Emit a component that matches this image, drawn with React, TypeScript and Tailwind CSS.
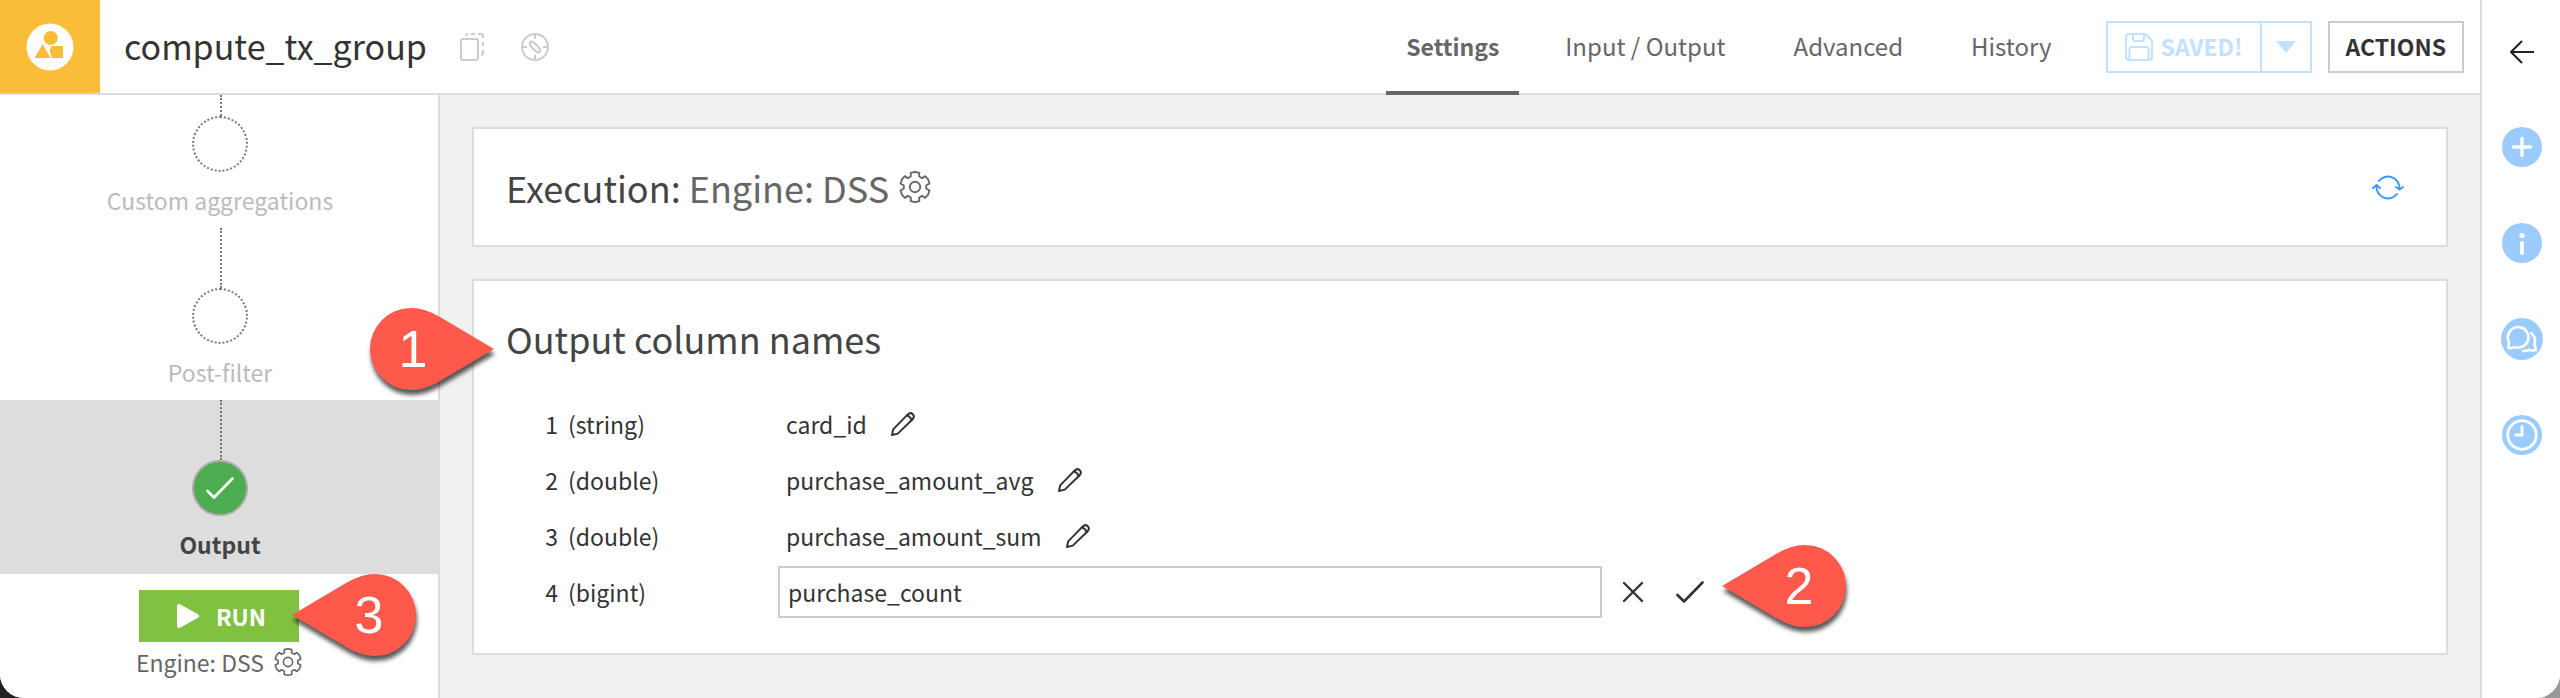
import { useState } from 'react';

interface Step {
  label: string;
  active?: boolean;
  first?: boolean;
}

interface OutputColumn {
  type: string;
  name: string;
  editing?: boolean;
}

const steps: Step[] = [
  { label: 'Custom aggregations', first: true },
  { label: 'Post-filter' },
  { label: 'Output', active: true },
];

const columns: OutputColumn[] = [
  { type: 'string', name: 'card_id' },
  { type: 'double', name: 'purchase_amount_avg' },
  { type: 'double', name: 'purchase_amount_sum' },
  { type: 'bigint', name: 'purchase_count', editing: true },
];

const tabs = ['Settings', 'Input / Output', 'Advanced', 'History'];

// outline of a six-tooth gear in a 28x28 box
const gearPoints = [0, 60, 120, 180, 240, 300]
  .flatMap((tooth) => [
    [tooth - 27, 9.8],
    [tooth - 21, 10],
    [tooth - 17, 13],
    [tooth, 13.3],
    [tooth + 17, 13],
    [tooth + 21, 10],
    [tooth + 27, 9.8],
  ])
  .map(([angle, radius]) => {
    const rad = (angle * Math.PI) / 180;
    return `${(14 + radius * Math.sin(rad)).toFixed(2)},${(14 - radius * Math.cos(rad)).toFixed(2)}`;
  })
  .join(' ');

const GearIcon = ({ className }: { className: string }) => (
  <svg viewBox="0 0 28 28" className={className} fill="none" stroke="currentColor" strokeWidth="1.6" strokeLinejoin="round">
    <polygon points={gearPoints} />
    <circle cx="14" cy="14" r="4.6" />
  </svg>
);

const PencilIcon = () => (
  <svg viewBox="0 0 24 24" className="size-6" fill="none" stroke="currentColor" strokeWidth="2" strokeLinejoin="round" strokeLinecap="round">
    <path d="M1 23 L2.2 17.4 L16.8 2.4 Q19.4 0 21.8 2.2 Q24 4.6 21.6 7.2 L6.8 21.6 Z" />
    <path d="M15.8 3.4 Q19.6 4.4 20.6 8.2" />
  </svg>
);

const CheckIcon = ({ className }: { className: string }) => (
  <svg viewBox="0 0 28 22" className={className} fill="none" stroke="currentColor" strokeWidth="2.6" strokeLinecap="round" strokeLinejoin="round">
    <path d="M1.5 14 L8 20.5 L26.5 1.5" />
  </svg>
);

interface PinProps {
  label: string;
  pointing: 'left' | 'right';
  className: string;
}

const Pin = ({ label, pointing, className }: PinProps) => (
  <div className={`pointer-events-none absolute z-10 h-[82px] w-[124px] ${className}`}>
    <svg viewBox="0 0 124 82" className="size-full overflow-visible drop-shadow-[1px_5px_2px_rgba(0,0,0,0.65)]">
      <path
        fill="#ff594b"
        d={
          pointing === 'right'
            ? 'M124 41 L70 9 Q55 0 41 0 A41 41 0 0 0 41 82 Q55 82 70 73 Z'
            : 'M0 41 L54 9 Q69 0 83 0 A41 41 0 0 1 83 82 Q69 82 54 73 Z'
        }
      />
    </svg>
    <span
      className={`absolute top-0 flex h-[82px] w-[82px] items-center justify-center font-['Liberation_Sans',sans-serif] text-[52px] leading-none text-white ${
        pointing === 'right' ? 'left-0 pl-1' : 'right-0 pr-3'
      }`}
    >
      {label}
    </span>
  </div>
);

const Header = () => {
  const [activeTab, setActiveTab] = useState('Settings');

  return (
    <header className="flex h-[95px] items-stretch border-b-2 border-[#dddddd] bg-white">
      <div className="flex w-[100px] shrink-0 items-center justify-center bg-[#f9bd38]">
        <svg viewBox="0 0 48 48" className="size-12" fill="#f9bd38">
          <circle cx="24" cy="24" r="23.5" fill="#fff" />
          <circle cx="24.7" cy="15" r="7" />
          <path d="M8.5 35 L16.7 21 L24.5 35 Z" />
          <path d="M25 23 H37 V35 H26 L23.5 28 Z" />
        </svg>
      </div>
      <h1 className="flex items-center pb-0.5 pl-6 text-[34px] leading-none text-[#333333]">compute_tx_group</h1>
      <div className="flex items-center gap-9 pl-8 text-[#cccccc]">
        <button type="button" aria-label="Copy">
          <svg viewBox="0 0 26 28" className="h-7 w-[26px]" fill="none" stroke="currentColor" strokeWidth="2">
            <rect x="2" y="6" width="17" height="21" rx="2" />
            <path d="M7 3 Q7 1 9 1 M12 1 H16 M19 1 H22 Q24 1 24 3 V5 M24 9 V13 M24 17 V20 Q24 22 22 22" />
          </svg>
        </button>
        <button type="button" aria-label="Explore">
          <svg viewBox="0 0 28 28" className="size-7" fill="none" stroke="currentColor" strokeWidth="2">
            <circle cx="14" cy="14" r="13" />
            <path d="M14 1 V6 M14 22 V27 M1 14 H6 M22 14 H27" />
            <ellipse cx="14" cy="14" rx="7" ry="2.6" transform="rotate(47 14 14)" />
          </svg>
        </button>
      </div>
      <nav className="ml-auto flex gap-6 text-[#666666]">
        {tabs.map((tab) => (
          <button
            key={tab}
            type="button"
            onClick={() => setActiveTab(tab)}
            className={`-mb-0.5 border-b-4 leading-8 ${
              tab === activeTab ? 'border-[#666666] px-5 text-[23px] font-bold' : 'border-transparent px-[22px] text-[24px]'
            }`}
          >
            {tab}
          </button>
        ))}
      </nav>
      <div className="flex items-center gap-4 pr-4 pl-8 text-[23px] font-bold">
        <div className="flex h-[52px] border-2 border-[#c4e0ff] text-[#c4e0ff]">
          <button type="button" className="flex items-center gap-2 px-[17px]">
            <svg viewBox="0 0 28 28" className="size-7" fill="none" stroke="currentColor" strokeWidth="2" strokeLinejoin="round">
              <path d="M4 1 H20.5 L27 8 V24 Q27 27 24 27 H4 Q1 27 1 24 V4 Q1 1 4 1 Z" />
              <path d="M8 1 V6 Q8 8 10 8 H17 Q19 8 19 6 V1" />
              <path d="M4.5 27 V16 Q4.5 14 6.5 14 H21.5 Q23.5 14 23.5 16 V27" />
            </svg>
            SAVED!
          </button>
          <button type="button" aria-label="Save options" className="flex w-[50px] items-center justify-center border-l-2 border-[#c4e0ff]">
            <svg viewBox="0 0 20 12" className="h-3 w-5" fill="currentColor">
              <path d="M0 0 H20 L10 12 Z" />
            </svg>
          </button>
        </div>
        <button type="button" className="h-[52px] border-2 border-[#cccccc] px-4 text-[#333333]">
          ACTIONS
        </button>
      </div>
    </header>
  );
};

const StepList = () => (
  <ol className="text-center text-[23px]">
    {steps.map((step) => (
      <li
        key={step.label}
        className={`flex flex-col items-center pl-0.5 ${
          step.active ? 'bg-[#dddddd] font-bold text-[#444444]' : 'text-[#bbbbbb]'
        }`}
      >
        <span className={`ml-0.5 border-l-2 border-dotted border-[#777777] ${step.first ? 'h-[21px]' : 'h-[60px]'}`} />
        <span
          className={`flex size-14 items-center justify-center rounded-full border-2 text-white ${
            step.active ? 'border-[#aaaaaa] bg-[#4dad50]' : 'border-dotted border-[#777777]'
          }`}
        >
          {step.active && <CheckIcon className="h-[22px] w-7" />}
        </span>
        <span className={`pt-3 leading-8 ${step.active ? 'pb-3.5' : 'pb-3'}`}>{step.label}</span>
      </li>
    ))}
  </ol>
);

const Sidebar = () => (
  <aside className="w-[440px] shrink-0 border-r-2 border-[#dddddd] bg-white">
    <StepList />
    <div className="flex flex-col items-center pt-4 text-[23px]">
      <div className="relative">
        <button type="button" className="flex h-[52px] w-40 items-center justify-center gap-4 bg-[#80c141] pl-1 font-bold text-white">
          <svg viewBox="0 0 24 26" className="h-[26px] w-6" fill="currentColor" stroke="currentColor" strokeWidth="4" strokeLinejoin="round">
            <path d="M3 3 L21 13 L3 23 Z" />
          </svg>
          RUN
        </button>
        <Pin label="3" pointing="left" className="-top-4 left-[153px]" />
      </div>
      <div className="flex items-center gap-2.5 pt-1 leading-8 text-[#666666]">
        Engine: DSS
        <button type="button" aria-label="Engine settings">
          <GearIcon className="size-7" />
        </button>
      </div>
    </div>
  </aside>
);

const ColumnRow = ({ column, index }: { column: OutputColumn; index: number }) => {
  const [name, setName] = useState(column.name);
  const inputId = `column-${index}`;

  return (
    <tr className="h-14">
      <td className="w-[52px] text-right">{index}</td>
      <td className="w-[220px] pl-2.5">
        {column.editing ? <label htmlFor={inputId}>({column.type})</label> : `(${column.type})`}
      </td>
      <td>
        {column.editing ? (
          <div className="flex items-center">
            <input
              id={inputId}
              type="text"
              value={name}
              onChange={(e) => setName(e.target.value)}
              className="h-[52px] w-full max-w-[824px] border-2 border-[#cccccc] bg-white px-2 outline-none"
            />
            <button type="button" aria-label="Cancel" className="ml-5">
              <svg viewBox="0 0 22 22" className="size-[22px]" stroke="currentColor" strokeWidth="2.4" strokeLinecap="round">
                <path d="M2 2 L20 20 M20 2 L2 20" />
              </svg>
            </button>
            <button type="button" aria-label="Confirm" className="relative ml-8">
              <CheckIcon className="h-[22px] w-7" />
              <Pin label="2" pointing="left" className="-top-9 left-[46px]" />
            </button>
          </div>
        ) : (
          <div className="flex items-center gap-6 pl-2">
            {name}
            <button type="button" aria-label={`Rename ${name}`}>
              <PencilIcon />
            </button>
          </div>
        )}
      </td>
    </tr>
  );
};

const Main = () => (
  <main className="flex min-w-0 flex-1 flex-col gap-8 bg-[#f1f1f1] p-8 text-[#333333]">
    <section className="flex h-[120px] items-center justify-between border-2 border-[#dddddd] bg-white pr-[42px] pl-8">
      <h2 className="flex items-center gap-2.5 text-[36px] leading-[48px] text-[#444444]">
        <span>
          Execution: <span className="text-[#666666]">Engine: DSS</span>
        </span>
        <button type="button" aria-label="Engine settings" className="text-[#666666]">
          <GearIcon className="size-8" />
        </button>
      </h2>
      <button type="button" aria-label="Refresh" className="text-[#3b99fc]">
        <svg viewBox="0 0 32 26" className="h-[26px] w-8" fill="none" stroke="currentColor" strokeWidth="2" strokeLinecap="round" strokeLinejoin="round">
          <path d="M7 7 A11.5 11.5 0 0 1 27.5 15" />
          <path d="M24 13 L27.5 15.5 L31 13" />
          <path d="M4.5 12 A11.5 11.5 0 0 0 25 20" />
          <path d="M1 14 L4.5 11 L8 14" />
        </svg>
      </button>
    </section>

    <section className="border-2 border-[#dddddd] bg-white px-8 py-[33px]">
      <h2 className="relative text-[36px] leading-[48px] text-[#444444]">
        Output column names
        <Pin label="1" pointing="right" className="-top-1.5 -left-[136px]" />
      </h2>
      <table className="mt-[34px] w-full table-fixed text-[23px] leading-8">
        <tbody>
          {columns.map((column, i) => (
            <ColumnRow key={column.name} column={column} index={i + 1} />
          ))}
        </tbody>
      </table>
    </section>
  </main>
);

const RightBar = () => (
  <aside className="flex w-20 shrink-0 flex-col items-center border-l-2 border-[#dddddd] bg-white pt-10 pl-0.5">
    <button type="button" aria-label="Open panel" className="text-[#222222]">
      <svg viewBox="0 0 24 24" className="size-6" fill="none" stroke="currentColor" strokeWidth="2">
        <path d="M24 12 H1 M12 1 L1 12 L12 23" />
      </svg>
    </button>
    <div className="flex flex-col gap-14 pt-[63px] text-[#9bcbff]">
      <button type="button" aria-label="Add">
        <svg viewBox="0 0 40 40" className="size-10">
          <circle cx="20" cy="20" r="20" fill="currentColor" />
          <path d="M20 11.5 V28.5 M11.5 20 H28.5" stroke="#fff" strokeWidth="3.4" strokeLinecap="round" />
        </svg>
      </button>
      <button type="button" aria-label="Details">
        <svg viewBox="0 0 40 40" className="size-10">
          <circle cx="20" cy="20" r="20" fill="currentColor" />
          <circle cx="20" cy="12.5" r="2.6" fill="#fff" />
          <path d="M20 20 V30" stroke="#fff" strokeWidth="4" strokeLinecap="round" />
        </svg>
      </button>
      <button type="button" aria-label="Discussions">
        <svg viewBox="0 0 40 40" className="size-10 overflow-visible" fill="none">
          <circle cx="20" cy="20" r="21" fill="currentColor" />
          <g stroke="#fff" strokeWidth="2.6" strokeLinejoin="round" strokeLinecap="round">
            <path d="M6.5 29 L7 23 Q5.5 20.5 5.8 18 A10.3 10.3 0 1 1 12.5 28 Q10 29.5 6.5 29 Z" />
            <path d="M29 14 Q34.5 18 32.5 25 L33.8 31 Q30 32 27.5 30.8 Q24.5 32.2 21 32" />
          </g>
        </svg>
      </button>
      <button type="button" aria-label="History">
        <svg viewBox="0 0 40 40" className="size-10" fill="none">
          <circle cx="20" cy="20" r="20" fill="currentColor" />
          <circle cx="20" cy="20" r="14.3" stroke="#fff" strokeWidth="2.8" />
          <path d="M20 11.5 V20 H14" stroke="#fff" strokeWidth="3" strokeLinecap="round" strokeLinejoin="round" />
        </svg>
      </button>
    </div>
  </aside>
);

const App = () => (
  <div className="bg-linear-to-r from-[#222222] to-[#999999] font-['Noto_Sans_CJK_SC',sans-serif]">
    <div className="flex min-h-screen overflow-hidden rounded-b-[24px] bg-white">
      <div className="flex min-w-0 flex-1 flex-col">
        <Header />
        <div className="flex flex-1">
          <Sidebar />
          <Main />
        </div>
      </div>
      <RightBar />
    </div>
  </div>
);

export default App;
